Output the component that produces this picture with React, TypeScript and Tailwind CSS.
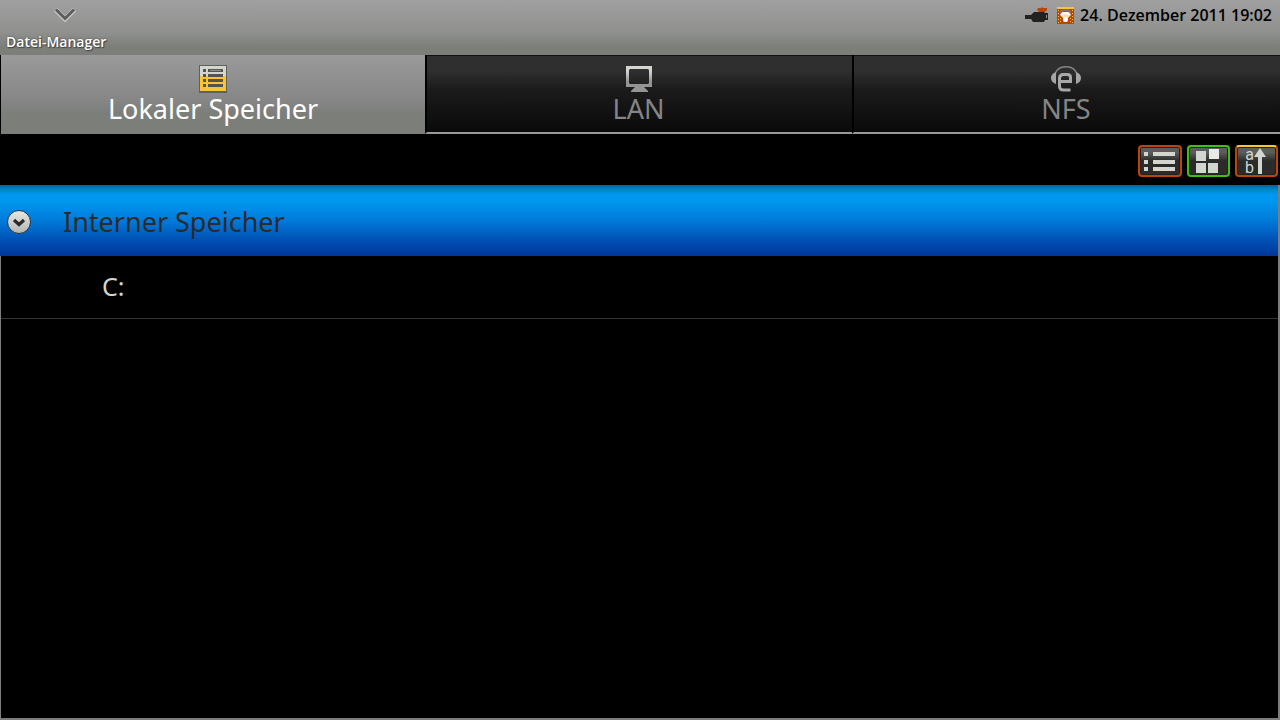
import { useState } from "react";
import type { ReactNode } from "react";

type Tab = {
  id: string;
  label: string;
  icon: ReactNode;
};

function ListIcon() {
  return (
    <svg width="28" height="28" viewBox="0 0 28 28" shapeRendering="crispEdges">
      <rect width="28" height="28" fill="#5f615e" />
      <rect x="1" y="1" width="26" height="10" fill="#d3d5cf" />
      <rect x="1" y="11" width="26" height="15" fill="#fac533" />
      {[4, 9, 14, 19].map((y) => (
        <g key={y} fill="#52544f">
          <rect x="4" y={y} width="3" height="3" />
          <rect x="9" y={y} width="15" height="3" />
        </g>
      ))}
      <rect x="11" y="5" width="11" height="1" fill="#8b8d88" />
    </svg>
  );
}

function MonitorIcon() {
  return (
    <svg width="28" height="28" viewBox="0 0 28 28">
      <defs>
        <linearGradient id="monitor" x1="0" y1="0" x2="0" y2="1">
          <stop offset="0.2" stopColor="#d3d5cf" />
          <stop offset="0.6" stopColor="#949494" />
        </linearGradient>
      </defs>
      <path
        fill="url(#monitor)"
        fillRule="evenodd"
        d="M1 1h26v21h-8l4 4v1H6v-1l4-4H1zM5 4L4 5v13l1 1h18l1-1V5l-1-1z"
      />
    </svg>
  );
}

function HeadsetIcon() {
  return (
    <svg width="32" height="28" viewBox="0 0 32 28" fill="none">
      <path d="M5 10C6 4 11 1.700 16 1.700S26 4 27 10" stroke="#858585" strokeWidth="1.400" />
      <path d="M6 7v12C3 18 1 16 1 13s2-5 5-6zM26 7v12c3-1 5-3 5-6s-2-5-5-6z" fill="#a5a5a5" />
      <path d="M10 16.500H20.500V12.500q0-3-3-3h-4Q9.500 9.500 9.500 13.500v7.500q0 4 4 4h7" stroke="#a9a9a9" strokeWidth="3" />
    </svg>
  );
}

function CameraIcon() {
  return (
    <svg width="24" height="18" viewBox="0 0 24 18">
      <path fill="#b9440c" d="M13 2h3l1-1 1 1h4v2l-2 2h-6l-2-2z" />
      <path fill="#222" d="M0 9h6l3-3h10l1 1h3v7h-3l-1 2H8l-2-3H0z" />
      <path fill="#8f8f8f" d="M21 9h1v3h-1z" />
    </svg>
  );
}

function WifiIcon() {
  return (
    <svg width="17" height="17" viewBox="0 0 17 17">
      <rect width="17" height="17" fill="#b9440c" />
      <rect width="17" height="2" fill="#fac533" />
      <path
        stroke="#fac533"
        strokeWidth="1"
        strokeDasharray="1 2"
        d="M1.500 3v13M15.500 3v13M3.500 11v5M13.500 11v5"
      />
      <path fill="#f1ddad" d="M3 8l2-3h7l2 3-3 3H6z" />
      <path fill="none" stroke="#777" strokeWidth="2" d="M3 5q5.500-4 11 0" />
      <path fill="none" stroke="#fff" strokeWidth="2" d="M4 8q4.500-4 9 0" />
      <rect x="6" y="10" width="5" height="5" rx="2" fill="#fff" />
    </svg>
  );
}

function ArrowIcon() {
  return (
    <svg width="24" height="24" viewBox="0 0 24 24">
      <defs>
        <linearGradient id="knob" x1="0" y1="0" x2="0" y2="1">
          <stop offset="0" stopColor="#e8e8e4" />
          <stop offset="1" stopColor="#b4b6b0" />
        </linearGradient>
      </defs>
      <circle cx="12" cy="12" r="11.500" fill="url(#knob)" stroke="#1b3444" />
      <path fill="none" stroke="#2b2b2b" strokeWidth="3.200" d="M7 10l5 4.500 5-4.500" />
    </svg>
  );
}

// shared dark face of the three toolbar buttons
const toolClass =
  "flex h-8 items-center justify-center rounded-[4px] border-2 bg-linear-to-b from-[#5b5d5a] from-20% to-[#2b2b2b] to-50% shadow-[inset_0_0_0_1px_#222]";

const tabs: Tab[] = [
  { id: "local", label: "Lokaler Speicher", icon: <ListIcon /> },
  { id: "lan", label: "LAN", icon: <MonitorIcon /> },
  { id: "nfs", label: "NFS", icon: <HeadsetIcon /> },
];

export default function App() {
  const [active, setActive] = useState("local");
  const [open, setOpen] = useState(true);

  return (
    <div className="flex min-h-screen flex-col bg-black font-['Noto_Sans',sans-serif]">
      <header className="bg-linear-to-b from-[#a0a0a0] via-[#8f908e] via-60% to-[#7b7e79] to-85%">
        <div className="flex h-[30px] items-center justify-between pr-2 pl-[54px]">
          <button type="button" aria-label="Menü">
            <svg width="22" height="16" viewBox="0 0 22 16" fill="none" className="block">
              <path d="M1.500 2.500l9.500 9.500 9.500-9.500" stroke="#c4c4c2" strokeWidth="5" />
              <path d="M2 2.500l9 9 9-9" stroke="#5c5e5b" strokeWidth="3" />
            </svg>
          </button>
          <div className="flex items-center">
            <CameraIcon />
            <span className="mr-1.5 ml-2">
              <WifiIcon />
            </span>
            <time className="font-['Open_Sans',sans-serif] text-base font-semibold text-black">
              24. Dezember 2011 19:02
            </time>
          </div>
        </div>
        <h1 className="h-[25px] pl-1.5 font-['Open_Sans',sans-serif] text-sm leading-6 font-semibold text-white [text-shadow:0_0_2px_#444,1px_1px_1px_#444]">
          Datei-Manager
        </h1>
      </header>

      <nav className="grid grid-cols-[425fr_427fr_428fr]">
        {tabs.map((tab) => (
          <button
            key={tab.id}
            type="button"
            onClick={() => setActive(tab.id)}
            className={
              "flex h-[79px] flex-col items-center pt-2.5 text-[27px] leading-[31px] " +
              (tab.id === active
                ? "border-l border-l-black bg-linear-to-b from-[#9a9a9a] via-[#878787] via-55% to-[#7b7e79] to-75% text-white"
                : "border-b-2 border-l-2 border-b-[#999] border-l-black bg-linear-to-b from-[#2f2f2f] from-20% via-[#1b1b1b] via-45% to-[#0a0a0a] pr-0.5 text-[#858585] shadow-[inset_0_1px_0_#111]")
            }
          >
            {tab.icon}
            {tab.label}
          </button>
        ))}
      </nav>

      <div className="flex h-[51px] items-center justify-end gap-[5px] pt-0.5 pr-0.5">
        <button type="button" aria-label="Liste" className={toolClass + " w-11 border-[#b9440c]"}>
          <svg width="34" height="24" viewBox="0 0 34 24" fill="#d3d5cf">
            {[3, 11, 18].map((y) => (
              <g key={y}>
                <rect x="1" y={y} width="4" height="4" />
                <rect x="10" y={y} width="22" height="4" />
              </g>
            ))}
          </svg>
        </button>
        <button type="button" aria-label="Kacheln" className={toolClass + " w-[43px] border-[#3fc10c]"}>
          <svg width="25" height="26" viewBox="0 0 25 26" fill="#d3d5cf">
            <path d="M0 3h10v10H0zM0 15h10v10H0zM12 15h10v10H12z" />
            <path fill="#e9e9e6" d="M13 1h10v10H13z" />
          </svg>
        </button>
        <button
          type="button"
          aria-label="Sortieren"
          className={toolClass + " w-[43px] border-[#b9440c] border-t-[#fac533] pr-0.5 text-[#d3d5cf]"}
        >
          <span className="font-[Roboto,sans-serif] text-base leading-[13px] whitespace-pre-line">
            {"a\nb"}
          </span>
          <svg width="12" height="26" viewBox="0 0 12 26" fill="#d3d5cf">
            <path d="M6 0l6 9H8v17H4V9H0z" />
          </svg>
        </button>
      </div>

      <main className="flex flex-1 flex-col border-r-2 border-b-2 border-[#7d7d7d]">
        <button
          type="button"
          aria-expanded={open}
          onClick={() => setOpen(!open)}
          className="flex h-[71px] items-center gap-8 bg-[linear-gradient(#00668f,#0080bf_5%,#0097ef_13%,#0097ef_24%,#0078d7_52%,#0050b4_78%,#00369a)] pt-[3px] pl-[7px] text-[27px] text-[#2b2b2b]"
        >
          <ArrowIcon />
          Interner Speicher
        </button>
        <div className="flex-1 border-l border-[#7d7d7d]">
          {open && (
            <ul>
              <li className="border-b border-[#333]">
                <button type="button" className="block h-[62px] w-full pl-[101px] text-left text-[25px] text-[#d3d5cf]">
                  C:
                </button>
              </li>
            </ul>
          )}
        </div>
      </main>
    </div>
  );
}
